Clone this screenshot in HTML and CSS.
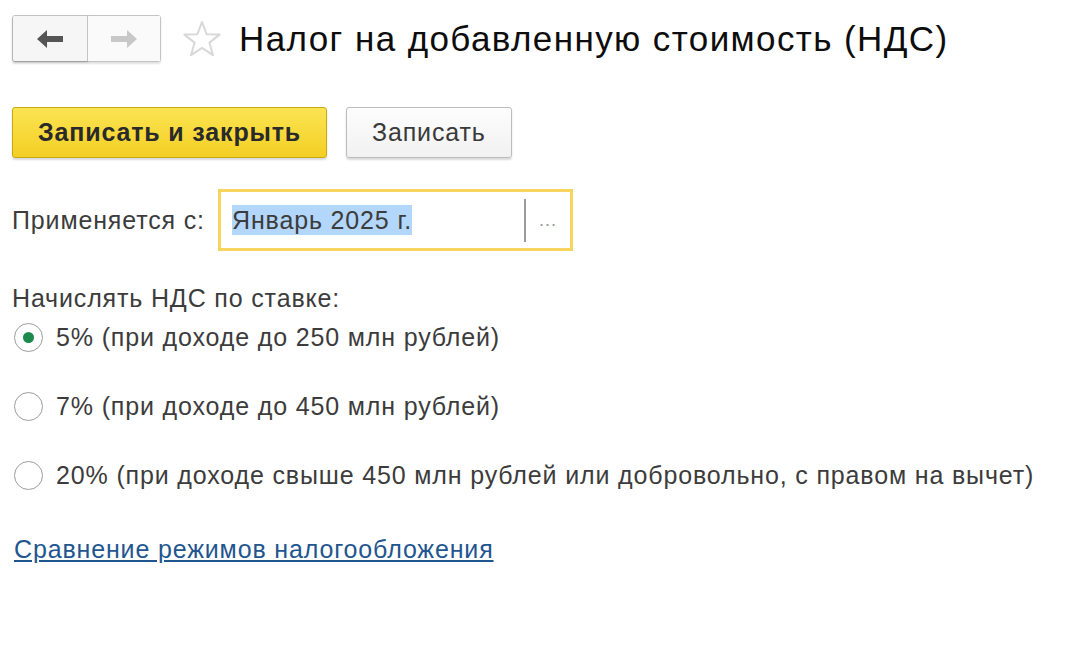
FILE: index.html
```html
<!DOCTYPE html>
<html>
  <head>
    <meta charset="UTF-8" />
    <title>Налог на добавленную стоимость (НДС)</title>
    <link rel="stylesheet" href="styles.css">
  </head>
  <body>
    <div class="form">
      <div class="header">
        <div class="nav">
          <button class="nav-button active">
            <svg width="28" height="20" viewBox="0 0 28 20">
              <path d="M1 10 L11 1 L11 7 L27 7 L27 13 L11 13 L11 19 Z" fill="#555" />
            </svg>
          </button>
          <button class="nav-button">
            <svg width="28" height="20" viewBox="0 0 28 20">
              <path d="M27 10 L17 1 L17 7 L1 7 L1 13 L17 13 L17 19 Z" fill="#c8c8c8" />
            </svg>
          </button>
        </div>
        <svg class="star" width="40" height="38" viewBox="0 0 40 38">
          <path d="M20 2 L24.6 14.2 L37.6 14.6 L27.4 22.6 L31 35.2 L20 27.9 L9 35.2 L12.6 22.6 L2.4 14.6 L15.4 14.2 Z"
            fill="none" stroke="#d8d8d8" stroke-width="2" stroke-linejoin="round" />
        </svg>
        <h1 class="title">Налог на добавленную стоимость (НДС)</h1>
      </div>

      <div class="toolbar">
        <button class="button primary">Записать и закрыть</button>
        <button class="button">Записать</button>
      </div>

      <div class="field">
        <label class="field-label">Применяется с:</label>
        <div class="input">
          <span class="input-value"><span class="selected">Январь 2025 г.</span></span>
          <span class="input-choose">...</span>
        </div>
      </div>

      <div class="group-title">Начислять НДС по ставке:</div>
      <div class="radio-list">
        <label class="radio-item">
          <span class="radio checked"></span>
          5% (при доходе до 250 млн рублей)
        </label>
        <label class="radio-item">
          <span class="radio"></span>
          7% (при доходе до 450 млн рублей)
        </label>
        <label class="radio-item">
          <span class="radio"></span>
          20% (при доходе свыше 450 млн рублей или добровольно, с правом на вычет)
        </label>
      </div>

      <a class="link" href="#">Сравнение режимов налогообложения</a>
    </div>
  </body>
</html>
```

FILE: styles.css
```css
body {
  margin: 0;
  background-color: #fff;
  color: #3c3c3c;
  font-family: "Liberation Sans", Arial, sans-serif;
  font-size: 25px;
  line-height: 26px;
  letter-spacing: 0.034em;
}

.form {
  padding: 15px 12px;
}

.header {
  display: flex;
  align-items: center;
  height: 47px;
}

.nav {
  display: flex;
  border: 1px solid #c4c4c4;
  border-radius: 3px;
  box-shadow: 0 2px 2px rgba(0, 0, 0, 0.12);
  background-color: #fafafa;
}

.nav-button {
  width: 72px;
  height: 45px;
  border: none;
  background-color: #fafafa;
  display: flex;
  align-items: center;
  justify-content: center;
  padding: 0;
}

.nav-button.active {
  width: 75px;
  border-right: 1px solid #c4c4c4;
  border-radius: 2px 0 0 2px;
  box-shadow: 0 1px 2px rgba(0, 0, 0, 0.25);
  background-color: #f6f6f6;
}

.star {
  margin-left: 21px;
}

.title {
  margin: 0 0 0 17px;
  font-size: 35px;
  line-height: 40px;
  font-weight: normal;
  letter-spacing: 1.4px;
  color: #0d0d0d;
}

.toolbar {
  display: flex;
  gap: 19px;
  margin-top: 45px;
}

.button {
  height: 51px;
  padding: 0 25px;
  border: 1px solid #bcbcbc;
  border-radius: 3px;
  background: linear-gradient(#fdfdfd, #f1f1f1);
  box-shadow: 0 2px 2px rgba(0, 0, 0, 0.15);
  color: #3a3a3a;
  font-family: inherit;
  font-size: 25px;
  letter-spacing: inherit;
}

.button.primary {
  width: 315px;
  padding: 0;
  border-color: #c9a913;
  background: linear-gradient(#fbe453, #f3cf23);
  color: #2a2a2a;
  font-weight: bold;
}

.field {
  display: flex;
  align-items: center;
  margin-top: 31px;
}

.field-label {
  width: 206px;
}

.input {
  display: flex;
  align-items: center;
  width: 349px;
  height: 56px;
  border: 3px solid #f6d45e;
}

.input-value {
  flex: 1;
  padding-left: 11px;
  height: 43px;
  display: flex;
  align-items: center;
  border-right: 2px solid #9a9a9a;
}

.selected {
  background-color: #b3d6fb;
  line-height: 30px;
}

.input-choose {
  width: 44px;
  text-align: center;
  color: #9a9a9a;
  font-size: 18px;
  letter-spacing: 1px;
}

.group-title {
  margin-top: 34px;
}

.radio-list {
  display: flex;
  flex-direction: column;
  gap: 43px;
  margin-top: 13px;
}

.radio-item {
  display: flex;
  align-items: center;
  gap: 13px;
  height: 26px;
}

.radio {
  position: relative;
  width: 27px;
  height: 27px;
  margin-left: 2px;
  border: 1.5px solid #9c9c9c;
  border-radius: 50%;
  background-color: #fff;
}

.radio.checked::after {
  content: "";
  position: absolute;
  left: 8px;
  top: 8px;
  width: 11px;
  height: 11px;
  border-radius: 50%;
  background-color: #1d8a4d;
}

.link {
  display: inline-block;
  margin-top: 48px;
  margin-left: 2px;
  color: #1f5690;
  text-decoration: underline;
}
```
